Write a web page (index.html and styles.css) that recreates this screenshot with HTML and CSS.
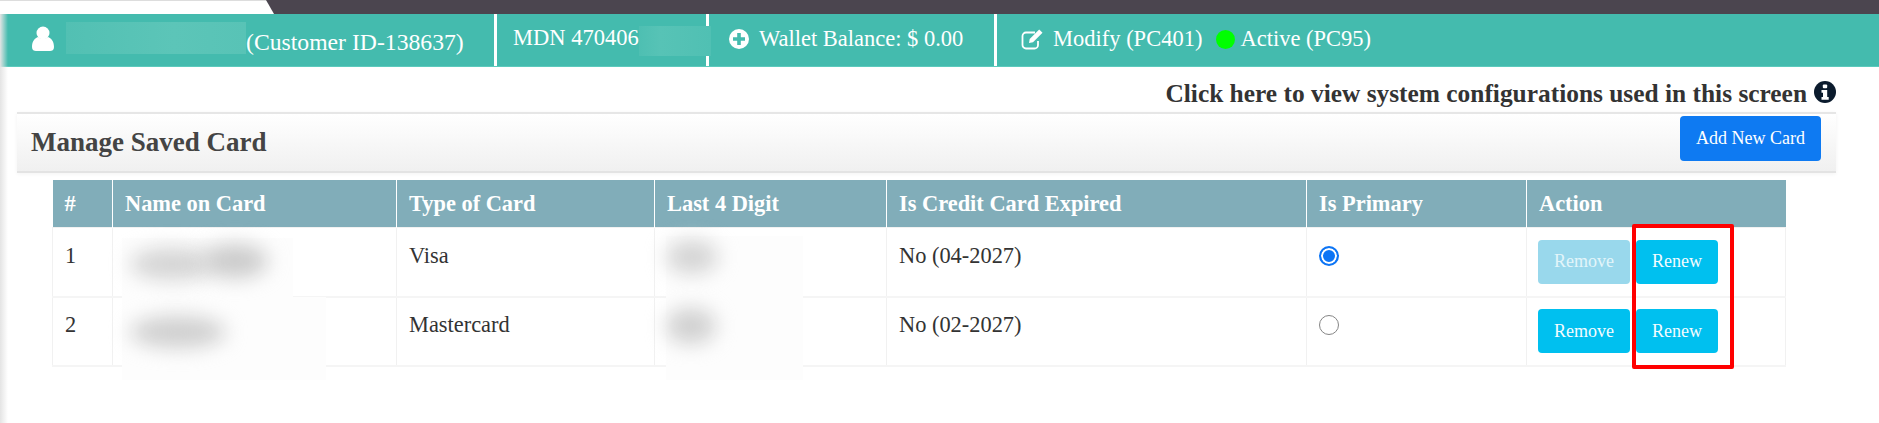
FILE: index.html
```html
<!DOCTYPE html>
<html lang="en">
<head>
    <meta charset="UTF-8">
    <title>Manage Saved Card</title>
    <link rel="stylesheet" href="styles.css">
</head>
<body>
    <div class="top-strip"><div class="top-wedge"></div></div>

    <div class="page">
        <div class="customer-bar">
            <div class="bar-item item-customer">
                <svg class="icon-user" viewBox="0 0 24 26"><circle cx="12" cy="7" r="6.500" fill="#fff"/><path d="M1 21c0-6 3-9 6-10 3 2.500 7 2.500 10 0 3 1 6 4 6 10 0 3-2 4-4 4H5c-2 0-4-1-4-4z" fill="#fff"/></svg>
                <span class="blot-teal blot-name"></span>
                <span>(Customer ID-138637)</span>
            </div>
            <div class="bar-item item-mdn">
                <span class="mdn-text">MDN 470406</span>
                <span class="blot-teal blot-mdn"></span>
            </div>
            <div class="bar-item item-wallet">
                <svg class="icon-plus" viewBox="0 0 20 20"><circle cx="10" cy="10" r="10" fill="#fff"/><path d="M8.200 4h3.600v4.200H16v3.600h-4.200V16H8.200v-4.200H4V8.200h4.200z" fill="#44bbae"/></svg>
                <span class="wallet-text">Wallet Balance: $ 0.00</span>
            </div>
            <div class="bar-item item-status">
                <svg class="icon-edit" viewBox="0 0 24 22" fill="none" stroke="#fff"><path d="M17 13v4a3.500 3.500 0 0 1-3.500 3.500H5A3.500 3.500 0 0 1 1.500 17V8A3.500 3.500 0 0 1 5 4.500h9" stroke-width="1.800"/><path d="M8 15l.7-4 9.500-9.500 3.300 3.300-9.500 9.500z" fill="#fff" stroke="none"/></svg>
                <span class="status-text">Modify (PC401)</span>
                <span class="dot-active"></span>
                <span class="status-text">Active (PC95)</span>
            </div>
        </div>

        <div class="config-line">
            <span>Click here to view system configurations used in this screen</span>
            <svg class="icon-info" viewBox="0 0 22 22"><circle cx="11" cy="11" r="11" fill="#0b1b2d"/><rect x="8.800" y="3.500" width="4.400" height="3.800" rx="1" fill="#fff"/><path d="M7.500 9h5.700v7h1.500v2.800H7.500V16H9v-4.200H7.500z" fill="#fff"/></svg>
        </div>

        <div class="panel-head">
            <h2>Manage Saved Card</h2>
            <button class="btn-add">Add New Card</button>
        </div>

        <div class="table-wrap">
            <table class="card-table">
                <colgroup>
                    <col class="c-num"><col class="c-name"><col class="c-type"><col class="c-digit"><col class="c-exp"><col class="c-prim"><col class="c-act">
                </colgroup>
                <thead>
                    <tr>
                        <th>#</th>
                        <th>Name on Card</th>
                        <th>Type of Card</th>
                        <th>Last 4 Digit</th>
                        <th>Is Credit Card Expired</th>
                        <th>Is Primary</th>
                        <th>Action</th>
                    </tr>
                </thead>
                <tbody>
                    <tr>
                        <td>1</td>
                        <td></td>
                        <td>Visa</td>
                        <td></td>
                        <td>No (04-2027)</td>
                        <td><span class="radio radio-on"></span></td>
                        <td class="cell-actions">
                            <div class="actions">
                                <button class="btn-cyan btn-remove is-disabled">Remove</button>
                                <button class="btn-cyan btn-renew">Renew</button>
                            </div>
                        </td>
                    </tr>
                    <tr>
                        <td>2</td>
                        <td></td>
                        <td>Mastercard</td>
                        <td></td>
                        <td>No (02-2027)</td>
                        <td><span class="radio"></span></td>
                        <td class="cell-actions">
                            <div class="actions">
                                <button class="btn-cyan btn-remove">Remove</button>
                                <button class="btn-cyan btn-renew">Renew</button>
                            </div>
                        </td>
                    </tr>
                </tbody>
            </table>

            <!-- redacted areas and the red marker lie over the table -->
            <div class="cover cover-name"></div>
            <div class="cover cover-name2"></div>
            <div class="cover cover-digit"></div>
            <div class="smudge smudge-n1"></div>
            <div class="smudge smudge-n1b"></div>
            <div class="smudge smudge-n2"></div>
            <div class="smudge smudge-d1"></div>
            <div class="smudge smudge-d2"></div>
            <div class="red-mark"></div>
        </div>
    </div>
</body>
</html>
```
FILE: styles.css
```css
html, body {
    margin: 0;
    padding: 0;
    height: 423px;
    overflow: hidden;
    background: #fff;
    font-family: "Liberation Serif", "Times New Roman", serif;
    color: #333;
}

.top-strip {
    height: 14px;
    background: #4b454f;
}
.top-wedge {
    height: 14px;
    width: 274px;
    background: linear-gradient(#ddd 0, #ddd 1px, #fff 1px);
    clip-path: polygon(0 0, 266px 0, 274px 100%, 0 100%);
}

.page {
    position: relative;
    height: 409px;
}
.page::before {
    content: "";
    position: absolute;
    left: 0;
    top: 0;
    bottom: 0;
    width: 8px;
    background: linear-gradient(to right, #e4e4e4, rgba(240,240,240,0));
    z-index: 2;
}

/* customer bar */
.customer-bar {
    display: flex;
    height: 53px;
    box-sizing: border-box;
    background: #44bbae;
    border-bottom: 1px solid #5ccabd;
    color: #fff;
    font-size: 22.500px;
}
.bar-item {
    display: flex;
    align-items: center;
    box-sizing: border-box;
    border-right: 3px solid #fff;
}
.item-customer {
    width: 497px;
    padding-left: 31px;
    padding-top: 5px;
    font-size: 23.700px;
}
.item-mdn {
    width: 212px;
    padding-left: 16px;
    padding-bottom: 4px;
    position: relative;
}
.item-wallet {
    width: 288px;
    padding-left: 20px;
    padding-bottom: 3px;
}
.item-status {
    flex: 1;
    border-right: 0;
    padding-left: 24px;
    padding-bottom: 2px;
}
.icon-user {
    width: 24px;
    height: 26px;
    margin-top: -8px;
}
.blot-teal {
    display: block;
    background: #59c3b6;
}
.blot-name {
    width: 180px;
    height: 32px;
    margin-left: 11px;
    margin-top: -9px;
    background: linear-gradient(to right, #52c0b3, #5cc5b8 60%, #58c3b6);
}
.blot-mdn {
    position: absolute;
    left: 142px;
    top: 12px;
    width: 72px;
    height: 30px;
    background: linear-gradient(to right, #4ebfb2, #57c3b6 30%, #50c0b3);
}
.icon-plus {
    width: 20px;
    height: 20px;
}
.wallet-text {
    margin-left: 10px;
}
.icon-edit {
    width: 24px;
    height: 22px;
}
.status-text {
    margin-left: 8px;
}
.dot-active {
    width: 19px;
    height: 19px;
    border-radius: 50%;
    background: #00ff00;
    margin-left: 14px;
    margin-right: -3px;
}

/* config link */
.config-line {
    display: flex;
    justify-content: flex-end;
    align-items: center;
    gap: 7px;
    height: 45px;
    padding: 8px 43px 0 0;
    box-sizing: border-box;
    font-size: 25.400px;
    font-weight: bold;
    color: #333;
}
.icon-info {
    width: 22px;
    height: 22px;
    margin-top: -3px;
}

/* panel heading */
.panel-head {
    display: flex;
    justify-content: space-between;
    align-items: flex-start;
    box-sizing: border-box;
    height: 61px;
    margin: 0 43px 0 17px;
    padding: 2px 15px 0 14px;
    border-top: 2px solid #e6e6e6;
    border-bottom: 2px solid #e3e3e3;
    background: linear-gradient(#fff, #f0f0f0);
    box-shadow: 0 1px 4px rgba(0,0,0,0.05);
}
.panel-head h2 {
    margin: 11px 0 0;
    font-size: 27px;
    font-weight: bold;
    color: #444;
}
.btn-add {
    width: 141px;
    height: 45px;
    border: 0;
    border-radius: 4px;
    background: #0e7af2;
    color: #fff;
    font-family: inherit;
    font-size: 18px;
}

/* table */
.table-wrap {
    position: relative;
    margin: 7px 0 0 52px;
    width: 1733px;
}
.card-table {
    table-layout: fixed;
    width: 1733px;
    border-collapse: collapse;
    font-size: 22.400px;
}
.c-num { width: 60px; }
.c-name { width: 284px; }
.c-type { width: 258px; }
.c-digit { width: 232px; }
.c-exp { width: 420px; }
.c-prim { width: 220px; }
.c-act { width: 259px; }

.card-table th {
    height: 47px;
    padding: 0 12px;
    text-align: left;
    background: #81adb9;
    color: #fff;
    border-left: 1px solid #fff;
    border-right: 1px solid #fff;
    font-weight: bold;
}
.card-table th:first-child { border-left: 0; }
.card-table th:last-child { border-right: 0; }
.card-table thead tr { border-bottom: 1px solid #a8c9d2; }
.card-table td {
    height: 69px;
    padding: 0 12px 12px;
    box-sizing: border-box;
    border: 1px solid #f1f1f1;
    border-bottom: 2px solid #f5f5f5;
    color: #333;
}
.card-table .cell-actions {
    padding: 0 11px;
}

.radio {
    display: block;
    box-sizing: border-box;
    width: 20px;
    height: 20px;
    border-radius: 50%;
    border: 1.500px solid #858585;
    margin-left: 0;
    background: #fff;
}
.radio-on {
    border: 2px solid #0d75f5;
    background: #0d75f5;
    box-shadow: inset 0 0 0 2px #fff;
}

.actions {
    display: flex;
    gap: 6px;
}
.btn-cyan {
    height: 44px;
    border: 0;
    border-radius: 4px;
    background: #00c0ef;
    color: #f4fcff;
    font-family: inherit;
    font-size: 18px;
}
.btn-remove { width: 92px; }
.btn-renew { width: 82px; }
.is-disabled {
    background: #99d8ec;
    color: #e3f5fa;
}

/* overlays */
.cover {
    position: absolute;
    background: #fdfdfd;
}
.cover-name {
    left: 70px;
    top: 58px;
    width: 171px;
    height: 60px;
}
.cover-name2 {
    left: 70px;
    top: 117px;
    width: 204px;
    height: 83px;
}
.cover-digit {
    left: 614px;
    top: 56px;
    width: 137px;
    height: 144px;
}
.smudge {
    position: absolute;
    border-radius: 50%;
    filter: blur(10px);
}
.smudge-n1 {
    left: 78px;
    top: 68px;
    width: 84px;
    height: 32px;
    background: #d4d4d4;
}
.smudge-n1b {
    left: 150px;
    top: 64px;
    width: 66px;
    height: 34px;
    background: #cbcbcb;
}
.smudge-n2 {
    left: 78px;
    top: 136px;
    width: 96px;
    height: 32px;
    background: #cfcfcf;
}
.smudge-d1 {
    left: 614px;
    top: 60px;
    width: 52px;
    height: 34px;
    background: #d4d4d4;
}
.smudge-d2 {
    left: 614px;
    top: 128px;
    width: 50px;
    height: 36px;
    background: #d0d0d0;
}
.red-mark {
    position: absolute;
    left: 1580px;
    top: 44px;
    width: 102px;
    height: 145px;
    box-sizing: border-box;
    border: 4px solid #f00;
    border-radius: 2px;
}
```
